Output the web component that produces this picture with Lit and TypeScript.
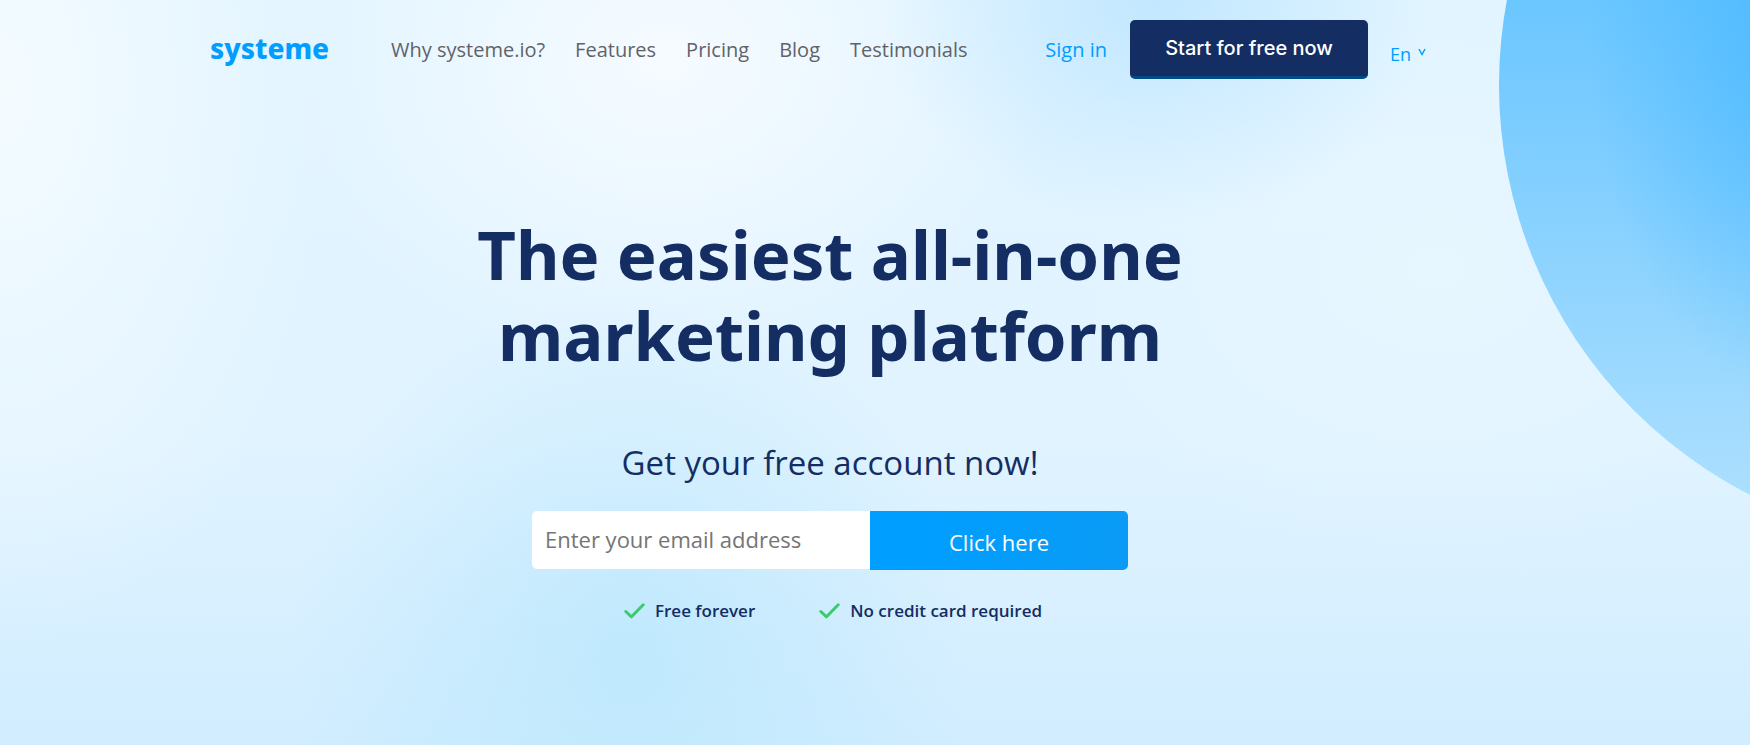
import { LitElement, html, css } from "lit";
import { customElement } from "lit/decorators.js";

const NAV = ["Why systeme.io?", "Features", "Pricing", "Blog", "Testimonials"];
const PERKS = ["Free forever", "No credit card required"];

@customElement("site-header")
class SiteHeader extends LitElement {
  static styles = css`
    :host { display: block; }
    .bar {
      display: flex;
      align-items: center;
      max-width: 1218px;
      margin: 0 auto;
      padding: 20px 0 0;
      white-space: nowrap;
      font-size: 20px;
      line-height: 24px;
    }
    a { text-decoration: none; }
    .logo {
      width: 181px;
      padding-bottom: 4px;
      color: #009eff;
      font: 800 28px/36px "Noto Sans", sans-serif;
    }
    .nav { display: flex; gap: 30px; }
    .nav a { color: #5f6368; }
    .actions { display: flex; align-items: center; margin-left: auto; }
    .signin { color: #009eff; margin-right: 23px; }
    .cta {
      box-sizing: border-box;
      width: 238px;
      height: 59px;
      padding: 0;
      border: 0;
      border-bottom: 3px solid #004c86;
      border-radius: 5px;
      background: #142d63;
      color: #fff;
      font: 500 20px/24px Inter, sans-serif;
    }
    .lang {
      display: flex;
      align-items: center;
      margin-left: 22px;
      padding-top: 8px;
      color: #009eff;
    }
    select {
      appearance: none;
      width: 36px;
      padding: 0;
      border: 0;
      background: none;
      color: inherit;
      font: 400 18px/24px "Open Sans", sans-serif;
    }
    .caret { margin: 0 2px 0 -8px; pointer-events: none; }
  `;

  render() {
    return html`
      <header class="bar">
        <a class="logo" href="#">systeme</a>
        <nav class="nav">${NAV.map((n) => html`<a href="#">${n}</a>`)}</nav>
        <div class="actions">
          <a class="signin" href="#">Sign in</a>
          <button class="cta" type="button">Start for free now</button>
          <div class="lang">
            <select aria-label="Language"><option>En</option></select>
            <svg class="caret" width="8" height="16" viewBox="0 0 8 16" aria-hidden="true">
              <path d="M1 3 L4 8.500 L7 3" fill="none" stroke="currentColor" stroke-width="1.500" />
            </svg>
          </div>
        </div>
      </header>
    `;
  }
}

@customElement("signup-hero")
class SignupHero extends LitElement {
  static styles = css`
    :host { display: block; }
    .hero {
      display: flex;
      flex-direction: column;
      align-items: center;
      padding: 135px 90px 0 0;
      color: #142d63;
      text-align: center;
    }
    h1 {
      margin: 0;
      max-width: 800px;
      font: 700 67px/81px "Noto Sans", sans-serif;
    }
    h2 {
      margin: 63px 0 0;
      font: 400 33px/48px "Open Sans", sans-serif;
    }
    form { display: flex; align-items: flex-start; margin-top: 24px; }
    input {
      box-sizing: border-box;
      width: 338px;
      height: 58px;
      padding: 0 13px 2px;
      border: 0;
      border-radius: 5px 0 0 5px;
      background: #fff;
      color: #142d63;
      font: 400 22px/28px "Open Sans", sans-serif;
    }
    input::placeholder { color: #757575; opacity: 1; }
    button {
      width: 258px;
      height: 59px;
      padding: 2px 0 0;
      border: 0;
      border-radius: 0 5px 5px 0;
      background: linear-gradient(100deg, #009eff 20%, #0a9bf5);
      color: #fff;
      font: 400 22px/28px "Open Sans", sans-serif;
    }
    ul {
      display: flex;
      gap: 64px;
      margin: 28px 0 0;
      padding: 0 0 0 6px;
      list-style: none;
      font-size: 17px;
      font-weight: 600;
      line-height: 26px;
    }
    li { display: flex; align-items: center; gap: 10px; }
  `;

  render() {
    return html`
      <main class="hero">
        <h1>The easiest all-in-one<br />marketing platform</h1>
        <h2>Get your free account now!</h2>
        <form>
          <input type="email" placeholder="Enter your email address" aria-label="Email address" />
          <button type="button">Click here</button>
        </form>
        <ul>
          ${PERKS.map(
            (p) => html`<li>
              <svg width="21" height="16" viewBox="0 0 21 16" aria-hidden="true">
                <path d="M1.800 8.500 L7.500 13.800 L19.200 1.800" fill="none" stroke="#3ccb6c"
                  stroke-width="3" stroke-linecap="round" stroke-linejoin="round" />
              </svg>
              <span>${p}</span>
            </li>`
          )}
        </ul>
      </main>
    `;
  }
}

@customElement("app-root")
class AppRoot extends LitElement {
  static styles = css`
    :host {
      display: block;
      position: relative;
      min-height: 100vh;
      overflow: hidden;
      font-family: "Open Sans", sans-serif;
      background:
        radial-gradient(ellipse 340px 360px at 36% 88%, rgba(182, 230, 252, 0.7), rgba(182, 230, 252, 0)),
        radial-gradient(ellipse 280px 220px at 66% 0%, rgba(186, 228, 255, 0.8), rgba(186, 228, 255, 0)),
        radial-gradient(ellipse 400px 320px at 38% 8%, rgba(248, 252, 255, 0.9), rgba(248, 252, 255, 0)),
        radial-gradient(ellipse 340px 560px at 0% 12%, rgba(246, 252, 255, 0.9), rgba(246, 252, 255, 0)),
        radial-gradient(ellipse 400px 300px at 82% 36%, rgba(234, 248, 255, 0.7), rgba(234, 248, 255, 0)),
        linear-gradient(180deg, #e1f4ff 0%, #e0f3ff 60%, #d1edff 100%);
    }
    .orb {
      position: absolute;
      top: -375px;
      right: -669px;
      width: 920px;
      height: 920px;
      border-radius: 50%;
      background:
        radial-gradient(ellipse 230px 350px at 320px 430px, rgba(62, 180, 255, 0.75), rgba(62, 180, 255, 0)),
        linear-gradient(180deg, #6ac6ff 40%, #acdfff 95%);
    }
    .page { position: relative; padding: 0 0 40px; }
    .head { padding: 0 112px 0 0; }
  `;

  render() {
    return html`
      <div class="orb" aria-hidden="true"></div>
      <div class="page">
        <site-header class="head"></site-header>
        <signup-hero></signup-hero>
      </div>
    `;
  }
}
